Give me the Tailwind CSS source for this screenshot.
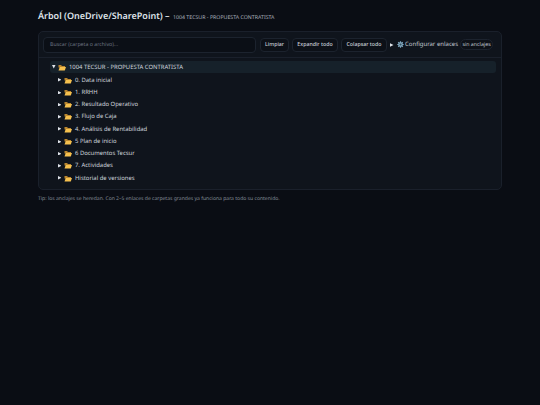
<!DOCTYPE html>
<html lang="es">
<head>
  <meta charset="UTF-8">
  <title>Árbol</title>
  <script src="https://cdn.jsdelivr.net/npm/@tailwindcss/browser@4"></script>
</head>
<body class="bg-[#0a0d14] text-[#dfe3e9] font-['Noto_Sans',sans-serif] antialiased [text-rendering:geometricPrecision] h-[405px] w-[540px] overflow-hidden">
  <main class="px-[38px] pt-[10px]">
    <!-- Title -->
    <h1 class="flex items-baseline gap-[1px] h-[21px] text-[9px] font-semibold leading-[12px] whitespace-pre">Árbol (OneDrive/SharePoint) – <span class="text-[5.25px] font-normal text-[#aab2be]">1004 TECSUR - PROPUESTA CONTRATISTA</span></h1>

    <!-- Panel -->
    <section class="h-[159px] bg-[#0f141c] border border-[#1a202b] rounded-[5px]">
      <!-- Toolbar -->
      <div class="flex items-center h-[26px] px-[4px] border-b border-[#1a202b]">
        <div class="w-[213px] h-[16px] flex items-center px-[6px] bg-[#0b0f16] border border-[#1c232e] rounded-[4px] text-[5.25px] text-[#6b7482]">Buscar (carpeta o archivo)...</div>
        <button class="ml-[4px] w-[29px] h-[14px] bg-[#0c1017] border border-[#1c232e] rounded-[4px] text-[5.25px] font-medium text-[#c9cfd8]">Limpiar</button>
        <button class="ml-[3px] w-[46px] h-[14px] bg-[#0c1017] border border-[#1c232e] rounded-[4px] text-[5.25px] font-medium text-[#c9cfd8]">Expandir todo</button>
        <button class="ml-[3px] w-[46px] h-[14px] bg-[#0c1017] border border-[#1c232e] rounded-[4px] text-[5.25px] font-medium text-[#c9cfd8]">Colapsar todo</button>
        <svg class="ml-[3px] w-[3.500px] h-[4px]" viewBox="0 0 4 4"><path fill="#dfe3e9" d="M0 0l4 2-4 2z"/></svg>
        <svg class="ml-[3.500px] w-[7px] h-[7px]" viewBox="0 0 24 24"><path stroke="#7fa6bd" stroke-width="4" d="M12 1v22M1 12h22M4.200 4.200l15.600 15.600M19.800 4.200L4.200 19.800"/><circle cx="12" cy="12" r="8" fill="#7fa6bd"/><circle cx="12" cy="12" r="3.500" fill="#35505f"/></svg>
        <span class="ml-[1px] text-[6px] text-[#c2c9d3] whitespace-nowrap">Configurar enlaces</span>
        <span class="ml-[2px] w-[33px] h-[11px] flex items-center justify-center bg-[#0c1017] border border-[#1c232e] rounded-full text-[5.25px] text-[#c2c9d3] whitespace-nowrap">sin anclajes</span>
      </div>

      <!-- Tree -->
      <ul class="pt-[3px] pl-[11px] pr-[5px] text-[5.9px] text-[#d0d6de]">
        <li class="flex items-center h-[12px] mb-[1px] pl-[2px] bg-[#16212a] rounded-[3px]"><svg class="w-[3.500px] h-[3.500px]" viewBox="0 0 4 4"><path fill="#dfe3e9" d="M0 0h4l-2 4z"/></svg><svg class="ml-[2.500px] mr-[3px] w-[8px] h-[7px]" viewBox="0 0 16 14"><path fill="#b9862f" d="M1 2h5l2 2h6v3H1z"/><path fill="#f5c04e" d="M3.500 6H16l-2.500 7H1z"/></svg>1004 TECSUR - PROPUESTA CONTRATISTA</li>
        <li class="flex items-center h-[12.25px] pl-[7.500px]"><svg class="w-[3.500px] h-[3.500px]" viewBox="0 0 4 4"><path fill="#dfe3e9" d="M0 0l4 2-4 2z"/></svg><svg class="ml-[3px] mr-[3px] w-[8px] h-[7px]" viewBox="0 0 16 14"><path fill="#b9862f" d="M1 2h5l2 2h6v3H1z"/><path fill="#f5c04e" d="M3.500 6H16l-2.500 7H1z"/></svg>0. Data inicial</li>
        <li class="flex items-center h-[12.25px] pl-[7.500px]"><svg class="w-[3.500px] h-[3.500px]" viewBox="0 0 4 4"><path fill="#dfe3e9" d="M0 0l4 2-4 2z"/></svg><svg class="ml-[3px] mr-[3px] w-[8px] h-[7px]" viewBox="0 0 16 14"><path fill="#b9862f" d="M1 2h5l2 2h6v3H1z"/><path fill="#f5c04e" d="M3.500 6H16l-2.500 7H1z"/></svg>1. RRHH</li>
        <li class="flex items-center h-[12.25px] pl-[7.500px]"><svg class="w-[3.500px] h-[3.500px]" viewBox="0 0 4 4"><path fill="#dfe3e9" d="M0 0l4 2-4 2z"/></svg><svg class="ml-[3px] mr-[3px] w-[8px] h-[7px]" viewBox="0 0 16 14"><path fill="#b9862f" d="M1 2h5l2 2h6v3H1z"/><path fill="#f5c04e" d="M3.500 6H16l-2.500 7H1z"/></svg>2. Resultado Operativo</li>
        <li class="flex items-center h-[12.25px] pl-[7.500px]"><svg class="w-[3.500px] h-[3.500px]" viewBox="0 0 4 4"><path fill="#dfe3e9" d="M0 0l4 2-4 2z"/></svg><svg class="ml-[3px] mr-[3px] w-[8px] h-[7px]" viewBox="0 0 16 14"><path fill="#b9862f" d="M1 2h5l2 2h6v3H1z"/><path fill="#f5c04e" d="M3.500 6H16l-2.500 7H1z"/></svg>3. Flujo de Caja</li>
        <li class="flex items-center h-[12.25px] pl-[7.500px]"><svg class="w-[3.500px] h-[3.500px]" viewBox="0 0 4 4"><path fill="#dfe3e9" d="M0 0l4 2-4 2z"/></svg><svg class="ml-[3px] mr-[3px] w-[8px] h-[7px]" viewBox="0 0 16 14"><path fill="#b9862f" d="M1 2h5l2 2h6v3H1z"/><path fill="#f5c04e" d="M3.500 6H16l-2.500 7H1z"/></svg>4. Análisis de Rentabilidad</li>
        <li class="flex items-center h-[12.25px] pl-[7.500px]"><svg class="w-[3.500px] h-[3.500px]" viewBox="0 0 4 4"><path fill="#dfe3e9" d="M0 0l4 2-4 2z"/></svg><svg class="ml-[3px] mr-[3px] w-[8px] h-[7px]" viewBox="0 0 16 14"><path fill="#b9862f" d="M1 2h5l2 2h6v3H1z"/><path fill="#f5c04e" d="M3.500 6H16l-2.500 7H1z"/></svg>5 Plan de inicio</li>
        <li class="flex items-center h-[12.25px] pl-[7.500px]"><svg class="w-[3.500px] h-[3.500px]" viewBox="0 0 4 4"><path fill="#dfe3e9" d="M0 0l4 2-4 2z"/></svg><svg class="ml-[3px] mr-[3px] w-[8px] h-[7px]" viewBox="0 0 16 14"><path fill="#b9862f" d="M1 2h5l2 2h6v3H1z"/><path fill="#f5c04e" d="M3.500 6H16l-2.500 7H1z"/></svg>6 Documentos Tecsur</li>
        <li class="flex items-center h-[12.25px] pl-[7.500px]"><svg class="w-[3.500px] h-[3.500px]" viewBox="0 0 4 4"><path fill="#dfe3e9" d="M0 0l4 2-4 2z"/></svg><svg class="ml-[3px] mr-[3px] w-[8px] h-[7px]" viewBox="0 0 16 14"><path fill="#b9862f" d="M1 2h5l2 2h6v3H1z"/><path fill="#f5c04e" d="M3.500 6H16l-2.500 7H1z"/></svg>7. Actividades</li>
        <li class="flex items-center h-[12.25px] pl-[7.500px]"><svg class="w-[3.500px] h-[3.500px]" viewBox="0 0 4 4"><path fill="#dfe3e9" d="M0 0l4 2-4 2z"/></svg><svg class="ml-[3px] mr-[3px] w-[8px] h-[7px]" viewBox="0 0 16 14"><path fill="#b9862f" d="M1 2h5l2 2h6v3H1z"/><path fill="#f5c04e" d="M3.500 6H16l-2.500 7H1z"/></svg>Historial de versiones</li>
      </ul>
    </section>

    <p class="mt-[6px] text-[5.05px] text-[#858d9a]">Tip: los anclajes se heredan. Con 2–5 enlaces de carpetas grandes ya funciona para todo su contenido.</p>
  </main>
</body>
</html>
